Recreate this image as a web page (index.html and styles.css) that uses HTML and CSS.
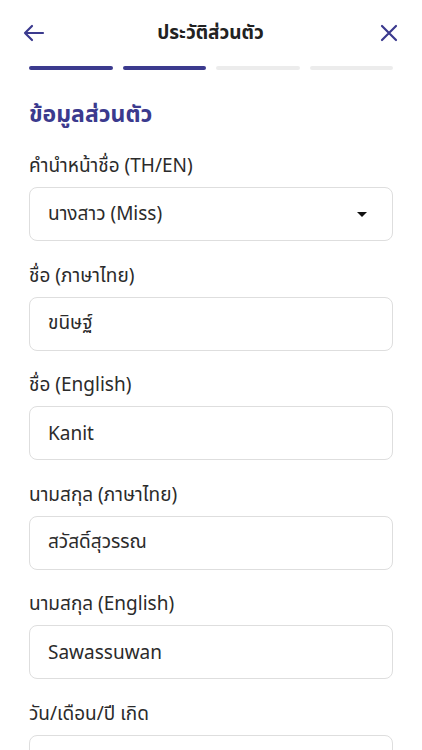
FILE: index.html
```html
<!DOCTYPE html>
<html lang="th">
  <head>
    <meta charset="UTF-8" />
    <meta name="viewport" content="width=device-width, initial-scale=1.0" />
    <title>ประวัติส่วนตัว</title>
    <link rel="stylesheet" href="styles.css">
  </head>
  <body>
    <div class="topbar">
      <button class="icon-btn" aria-label="back">
        <svg width="22" height="18" viewBox="0 0 22 18" fill="none" stroke="#3b3a8e" stroke-width="2.2" stroke-linecap="round" stroke-linejoin="round">
          <path d="M20 9H2M9 2L2 9l7 7" />
        </svg>
      </button>
      <h1 class="title">ประวัติส่วนตัว</h1>
      <button class="icon-btn" aria-label="close">
        <svg width="18" height="18" viewBox="0 0 18 18" fill="none" stroke="#3b3a8e" stroke-width="2.2" stroke-linecap="round">
          <path d="M2 2l14 14M16 2L2 16" />
        </svg>
      </button>
    </div>

    <div class="steps">
      <span class="step done"></span>
      <span class="step done"></span>
      <span class="step"></span>
      <span class="step"></span>
    </div>

    <div class="form">
      <h2 class="section">ข้อมูลส่วนตัว</h2>

      <div class="field">
        <label>คำนำหน้าชื่อ (TH/EN)</label>
        <div class="box select">
          <span>นางสาว (Miss)</span>
          <span class="caret"></span>
        </div>
      </div>

      <div class="field">
        <label>ชื่อ (ภาษาไทย)</label>
        <div class="box">ขนิษฐ์</div>
      </div>

      <div class="field">
        <label>ชื่อ (English)</label>
        <div class="box">Kanit</div>
      </div>

      <div class="field">
        <label>นามสกุล (ภาษาไทย)</label>
        <div class="box">สวัสดิ์สุวรรณ</div>
      </div>

      <div class="field">
        <label>นามสกุล (English)</label>
        <div class="box">Sawassuwan</div>
      </div>

      <div class="field">
        <label>วัน/เดือน/ปี เกิด</label>
        <div class="box"></div>
      </div>
    </div>
  </body>
</html>
```

FILE: styles.css
```css
body {
  margin: 0;
  font-family: "Noto Sans", "Noto Sans Thai", sans-serif;
  background: #fff;
  color: #2b2b2b;
}
.topbar {
  display: flex;
  align-items: center;
  justify-content: space-between;
  height: 66px;
  padding: 0 24px 0 23px;
}
.icon-btn {
  border: none;
  background: none;
  padding: 0;
  width: 22px;
  display: flex;
  align-items: center;
  cursor: pointer;
}
.icon-btn:last-child {
  justify-content: flex-end;
}
.title {
  margin: 0;
  font-size: 19px;
  font-weight: 700;
  color: #222;
}
.steps {
  display: flex;
  gap: 10px;
  padding: 0 29px;
}
.step {
  flex: 1;
  height: 4px;
  border-radius: 2px;
  background: #ececec;
}
.step.done {
  background: #3b3a8e;
}
.form {
  padding: 0 29px;
}
.section {
  margin: 26px 0 23px;
  font-size: 23px;
  font-weight: 700;
  color: #3b3a8e;
  line-height: 34px;
}
.field {
  margin-bottom: 21.5px;
}
.field label {
  display: block;
  font-size: 19px;
  line-height: 24px;
  margin-bottom: 10px;
  color: #2b2b2b;
}
.box {
  height: 52px;
  border: 1.5px solid #dedede;
  border-radius: 8px;
  padding: 0 18px;
  display: flex;
  align-items: center;
  font-size: 19px;
  color: #2b2b2b;
}
.select {
  justify-content: space-between;
  padding-right: 25px;
}
.caret {
  width: 0;
  height: 0;
  border-left: 5px solid transparent;
  border-right: 5px solid transparent;
  border-top: 5px solid #111;
}
```
